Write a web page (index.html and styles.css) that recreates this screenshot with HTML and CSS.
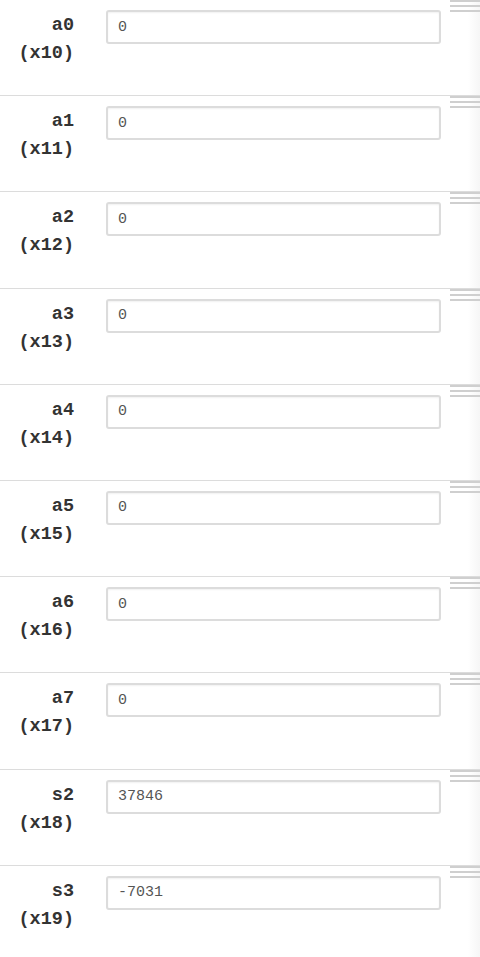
FILE: index.html
```html
<!DOCTYPE html>
<html>
<head>
<meta charset="utf-8">
<link rel="stylesheet" href="styles.css">
</head>
<body>
<div class="list">
  <div class="row"><div class="label"><span>a0</span><span>(x10)</span></div><input class="field" value="0"><div class="grip"><i></i><i></i><i></i></div></div>
  <div class="row"><div class="label"><span>a1</span><span>(x11)</span></div><input class="field" value="0"><div class="grip"><i></i><i></i><i></i></div></div>
  <div class="row"><div class="label"><span>a2</span><span>(x12)</span></div><input class="field" value="0"><div class="grip"><i></i><i></i><i></i></div></div>
  <div class="row"><div class="label"><span>a3</span><span>(x13)</span></div><input class="field" value="0"><div class="grip"><i></i><i></i><i></i></div></div>
  <div class="row"><div class="label"><span>a4</span><span>(x14)</span></div><input class="field" value="0"><div class="grip"><i></i><i></i><i></i></div></div>
  <div class="row"><div class="label"><span>a5</span><span>(x15)</span></div><input class="field" value="0"><div class="grip"><i></i><i></i><i></i></div></div>
  <div class="row"><div class="label"><span>a6</span><span>(x16)</span></div><input class="field" value="0"><div class="grip"><i></i><i></i><i></i></div></div>
  <div class="row"><div class="label"><span>a7</span><span>(x17)</span></div><input class="field" value="0"><div class="grip"><i></i><i></i><i></i></div></div>
  <div class="row"><div class="label"><span>s2</span><span>(x18)</span></div><input class="field" value="37846"><div class="grip"><i></i><i></i><i></i></div></div>
  <div class="row"><div class="label"><span>s3</span><span>(x19)</span></div><input class="field" value="-7031"><div class="grip"><i></i><i></i><i></i></div></div>
</div>
</body>
</html>
```
FILE: styles.css
```css
html, body {
  margin: 0;
  padding: 0;
  background: #fff;
}
.list {
  width: 480px;
  min-height: 957px;
  background: linear-gradient(to right, #fff 0, #fff 468px, #f6f6f6 480px);
}
.row {
  display: flex;
  align-items: flex-start;
  height: 95.2px;
  border-bottom: 1px solid #dcdcdc;
}
.label {
  width: 74px;
  flex: none;
  padding-top: 12px;
  display: flex;
  flex-direction: column;
  align-items: flex-end;
  font-family: "Liberation Mono", "DejaVu Sans Mono", monospace;
  font-weight: bold;
  font-size: 18.5px;
  line-height: 28px;
  color: #333;
}
.field {
  flex: none;
  box-sizing: border-box;
  width: 335px;
  height: 34px;
  margin: 10px 0 0 32px;
  padding: 0 10px;
  border: 2px solid #dcdcdc;
  border-radius: 3px;
  box-shadow: inset 0 1px 2px rgba(0, 0, 0, 0.06);
  background: #fff;
  font-family: "Liberation Mono", "DejaVu Sans Mono", monospace;
  font-size: 15px;
  color: #555;
  outline: none;
}
.grip {
  flex: none;
  width: 30px;
  margin-left: 9px;
  display: flex;
  flex-direction: column;
  gap: 3px;
}
.grip i {
  display: block;
  height: 2px;
  background: #cfcfcf;
}
```
